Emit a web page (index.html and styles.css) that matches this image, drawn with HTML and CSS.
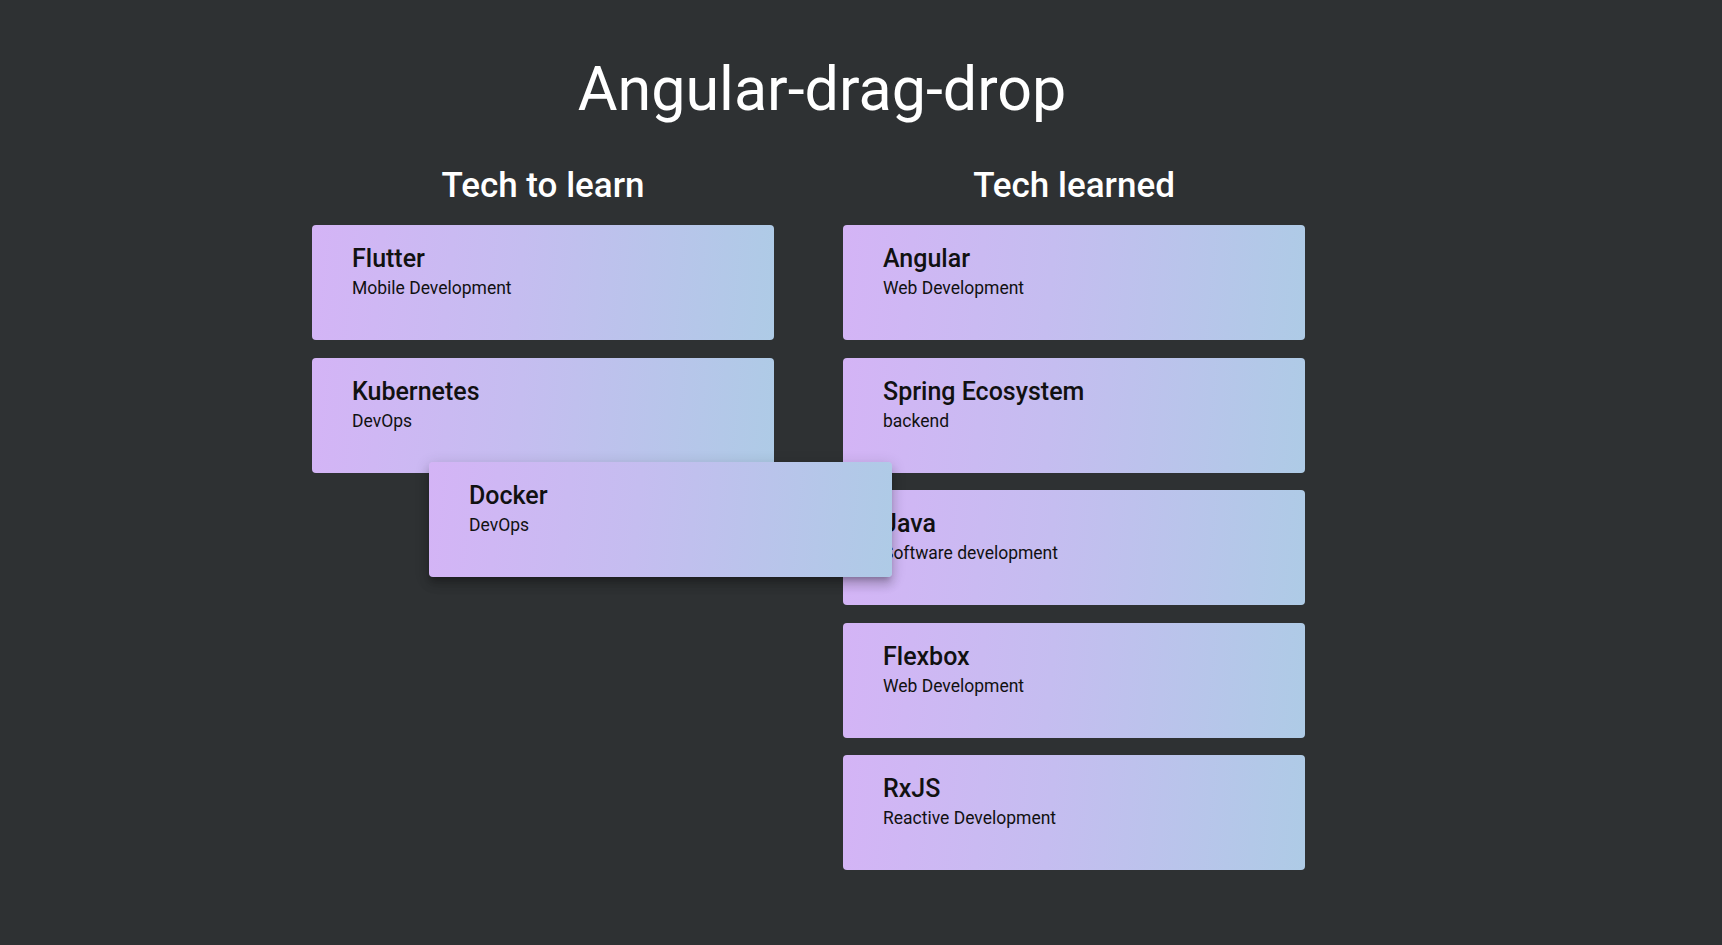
FILE: index.html
```html
<!DOCTYPE html>
<html lang="en">
<head>
<meta charset="utf-8">
<title>Angular-drag-drop</title>
<link rel="stylesheet" href="styles.css">
</head>
<body>
<div class="app">
  <h1 class="title">Angular-drag-drop</h1>
  <div class="boards">
    <section class="column">
      <h2 class="column-title">Tech to learn</h2>
      <div class="list">
        <div class="card"><div class="card-title">Flutter</div><div class="card-sub">Mobile Development</div></div>
        <div class="card"><div class="card-title">Kubernetes</div><div class="card-sub">DevOps</div></div>
      </div>
    </section>
    <section class="column">
      <h2 class="column-title">Tech learned</h2>
      <div class="list">
        <div class="card"><div class="card-title">Angular</div><div class="card-sub">Web Development</div></div>
        <div class="card"><div class="card-title">Spring Ecosystem</div><div class="card-sub">backend</div></div>
        <div class="card"><div class="card-title">Java</div><div class="card-sub">Software development</div></div>
        <div class="card"><div class="card-title">Flexbox</div><div class="card-sub">Web Development</div></div>
        <div class="card"><div class="card-title">RxJS</div><div class="card-sub">Reactive Development</div></div>
      </div>
    </section>
  </div>
</div>
<div class="card drag-preview"><div class="card-title">Docker</div><div class="card-sub">DevOps</div></div>
</body>
</html>
```
FILE: styles.css
```css
html, body {
  margin: 0;
  background: #2e3133;
  font-family: Roboto, "Liberation Sans", sans-serif;
}
body {
  position: relative;
  min-height: 945px;
}
.app {
  padding-top: 53px;
  padding-left: 312px;
  width: 1020px;
}
.title {
  margin: 0;
  font-size: 61px;
  font-weight: 400;
  line-height: 72px;
  color: #ffffff;
  text-align: center;
}
.boards {
  display: flex;
  gap: 69px;
  margin-top: 39.5px;
}
.column {
  width: 462px;
}
.column-title {
  margin: 0 0 19.5px;
  font-size: 35px;
  font-weight: 500;
  line-height: 41px;
  color: #ffffff;
  text-align: center;
}
.list {
  display: flex;
  flex-direction: column;
  gap: 17.5px;
}
.card {
  box-sizing: border-box;
  height: 115px;
  padding: 19px 40px;
  border-radius: 4px;
  background: linear-gradient(95deg, #d4b4f6 0%, #c5bdf0 45%, #aecbe6 100%);
  color: #111111;
}
.card-title {
  font-size: 25px;
  font-weight: 500;
  line-height: 29px;
}
.card-sub {
  margin-top: 5px;
  font-size: 17.5px;
  font-weight: 400;
  line-height: 20.5px;
}
.drag-preview {
  position: absolute;
  left: 429px;
  top: 462px;
  width: 463px;
  box-shadow: 0 5px 5px -3px rgba(0,0,0,.2), 0 8px 10px 1px rgba(0,0,0,.14), 0 3px 14px 2px rgba(0,0,0,.12);
}
```
